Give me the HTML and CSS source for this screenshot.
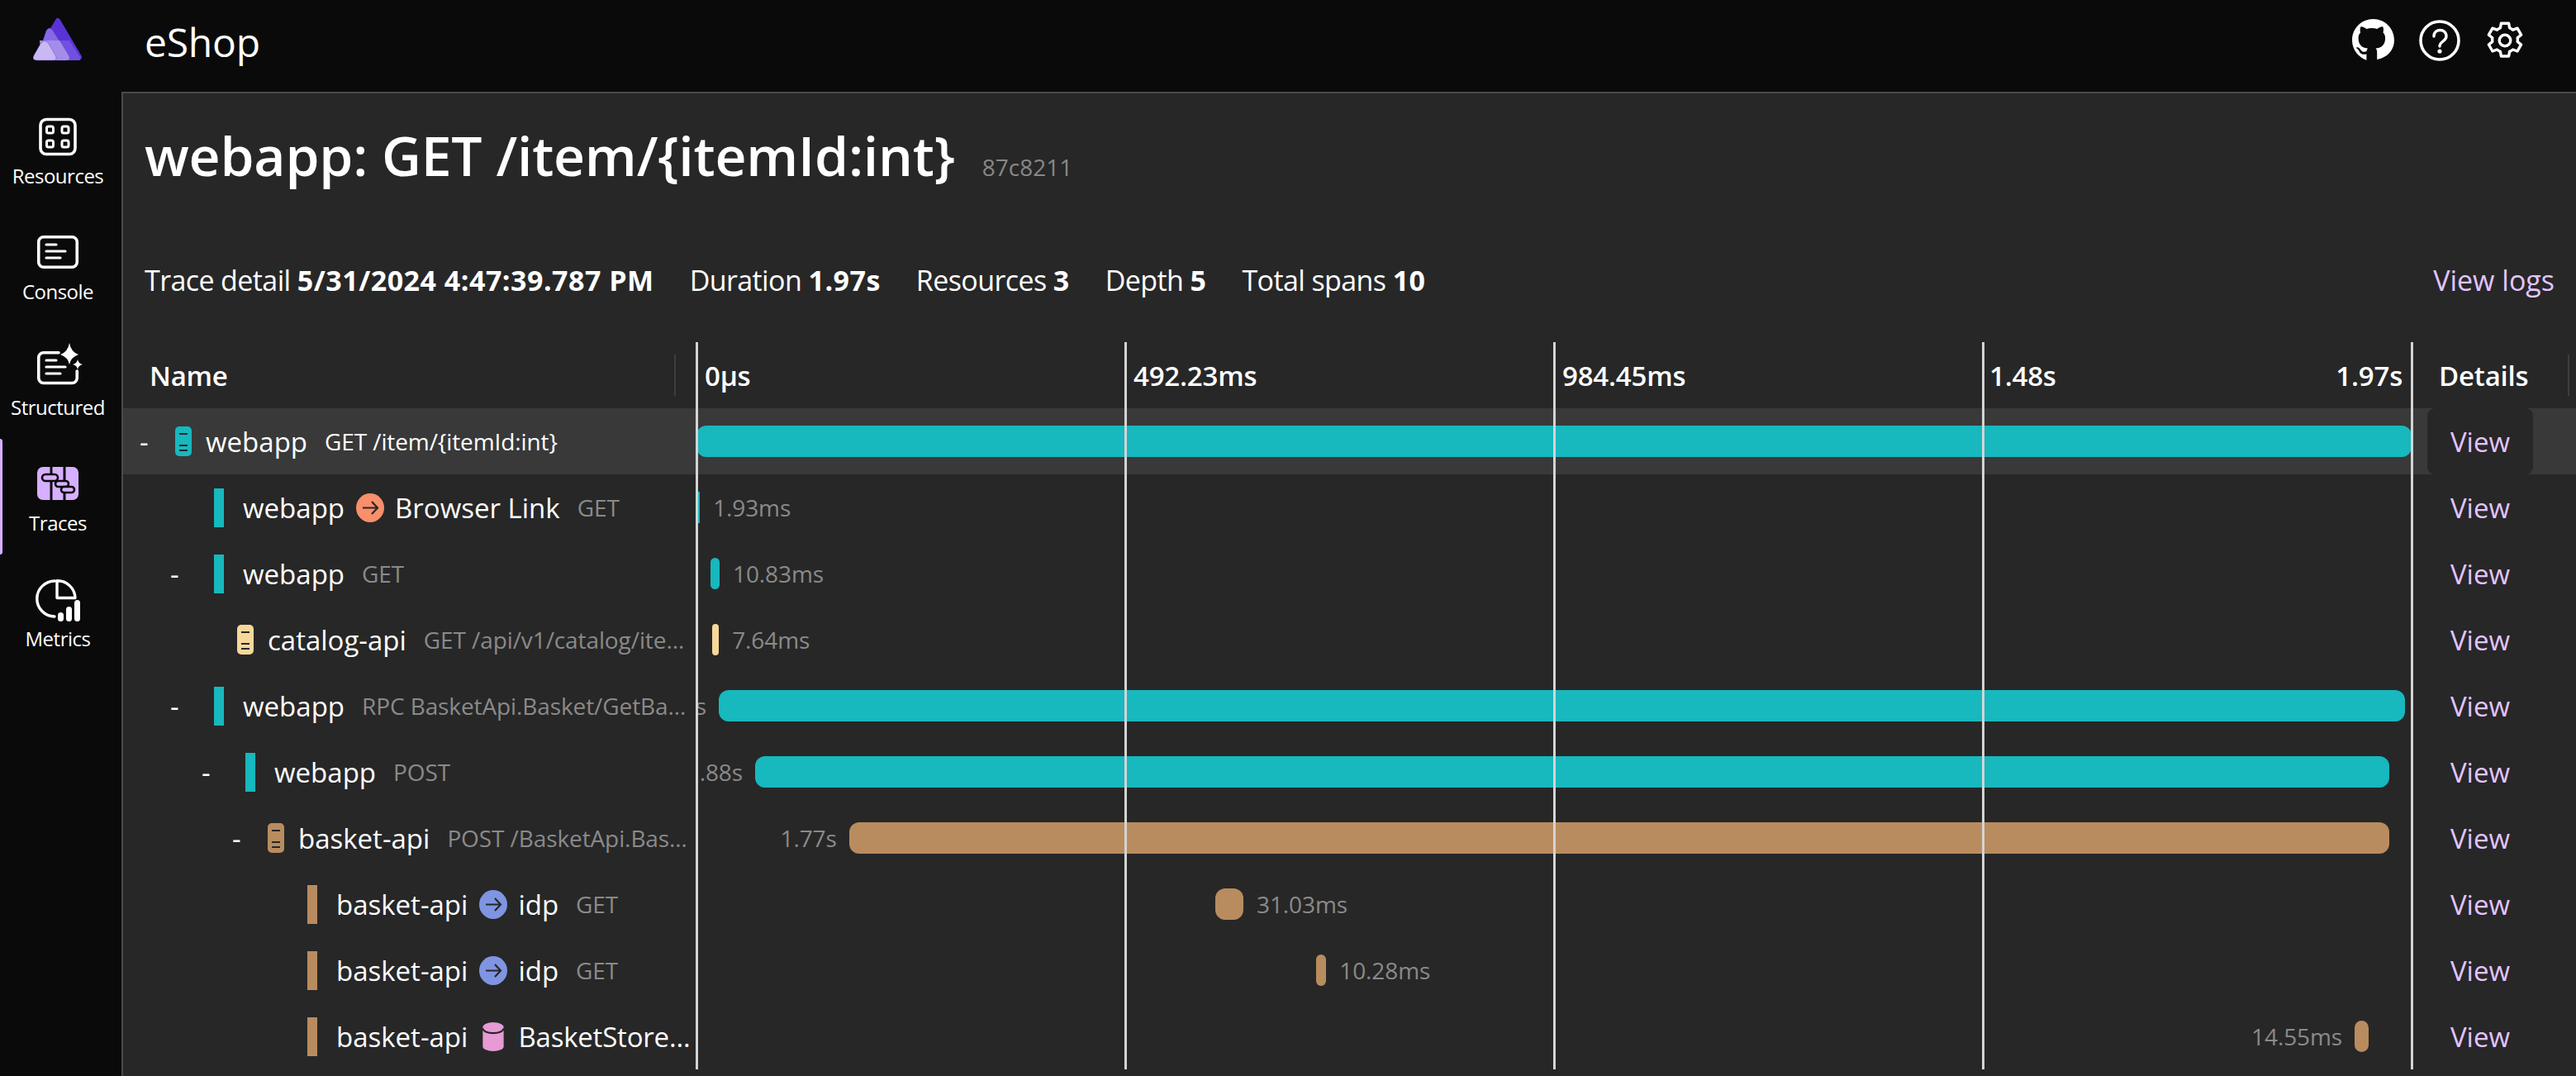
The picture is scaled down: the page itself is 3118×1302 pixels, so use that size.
FILE: index.html
```html
<!DOCTYPE html>
<html lang="en">
<head>
    <meta charset="UTF-8">
    <title>eShop - Trace detail</title>
    <link rel="stylesheet" href="styles.css">
</head>
<body>
    <header class="topbar">
        <div class="logo">
            <svg width="60" height="54" viewBox="0 0 60 54">
                <path d="M30 5 L56 49 H4 Z" fill="#5a33d6" stroke="#5a33d6" stroke-width="6" stroke-linejoin="round"/>
                <path d="M16 29 H44 L57 49 Q59 53 55 53 H10 Z" fill="#7050e0"/>
                <path d="M16 17 Q20 11 24 17 L43 47 Q46 53 40 53 H4 Z" fill="#8669ea" stroke="#4a2bb0" stroke-opacity=".35"/>
                <path d="M8 29 H32 L43 47 Q46 53 40 53 H10 Z" fill="#a28de9"/>
                <path d="M9 33 Q14 26 19 33 L27 47 Q30 53 24 53 H5 Q-2 53 1 47 Z" fill="#c9b8f4" stroke="#4a2bb0" stroke-opacity=".35"/>
            </svg>
        </div>
        <div class="app-name">eShop</div>
        <div class="top-icons">
            <svg width="51" height="51" viewBox="0 0 16 16"><path fill="#fff" d="M8 0C3.58 0 0 3.58 0 8c0 3.54 2.29 6.53 5.47 7.59v-2.24c-2.01.37-2.53-.49-2.69-.94-.09-.23-.48-.94-.82-1.13-.28-.15-.68-.52-.01-.53.63-.01 1.08.58 1.23.82.72 1.21 1.87.87 2.33.66.07-.52.28-.87.51-1.07-1.78-.2-3.64-.89-3.64-3.95 0-.87.31-1.59.82-2.15-.08-.2-.36-1.02.08-2.12 0 0 .67-.21 2.2.82.64-.18 1.32-.27 2-.27s1.36.09 2 .27c1.53-1.04 2.2-.82 2.2-.82.44 1.1.16 1.92.08 2.12.51.56.82 1.27.82 2.15 0 3.07-1.87 3.75-3.65 3.95.29.25.54.73.54 1.48v2.77C13.71 14.53 16 11.53 16 8c0-4.42-3.58-8-8-8z"/></svg>
            <svg width="50" height="50" viewBox="0 0 50 50">
                <circle cx="25" cy="25" r="23" fill="none" stroke="#fff" stroke-width="3.6"/>
                <path d="M18 20 C18 10 33 10 33 20 C33 26 25 26 25 32" fill="none" stroke="#fff" stroke-width="3.4" stroke-linecap="round"/>
                <circle cx="25" cy="38" r="2.6" fill="#fff"/>
            </svg>
            <svg width="48" height="50" viewBox="0 0 24 24" fill="none" stroke="#fff" stroke-width="1.7" stroke-linejoin="round">
                <circle cx="12" cy="12" r="3.4"/>
                <path d="M9.7 1.6 h4.6 l.5 2.8 a8 8 0 0 1 2 1.2 l2.7-1 2.3 4-2.2 1.8 a8 8 0 0 1 0 2.3 l2.2 1.8-2.3 4-2.7-1 a8 8 0 0 1-2 1.2 l-.5 2.8 h-4.6 l-.5-2.8 a8 8 0 0 1-2-1.2 l-2.7 1-2.3-4 2.2-1.8 a8 8 0 0 1 0-2.3 l-2.2-1.8 2.3-4 2.7 1 a8 8 0 0 1 2-1.2 z"/>
            </svg>
        </div>
    </header>

    <div class="shell">
        <nav class="sidenav">
            <a class="nav-item">
                <svg class="nav-icon" viewBox="0 0 60 48" fill="none" stroke="#fff">
                    <rect x="9" y="3.5" width="42" height="42" rx="7" stroke-width="3.6"/>
                    <rect x="16.5" y="12" width="8" height="8" rx="2" stroke-width="3"/>
                    <rect x="35" y="12" width="8" height="8" rx="2" stroke-width="3"/>
                    <rect x="16.5" y="29" width="8" height="8" rx="2" stroke-width="3"/>
                    <rect x="35" y="29" width="8" height="8" rx="2" stroke-width="3"/>
                </svg>
                <span>Resources</span>
            </a>
            <a class="nav-item">
                <svg class="nav-icon" viewBox="0 0 60 48" fill="none" stroke="#fff" stroke-linecap="round">
                    <rect x="6.75" y="5.75" width="46.5" height="36.5" rx="6" stroke-width="3.6"/>
                    <path d="M16 15 H28 M16 23 H39 M16 31 H33" stroke-width="3.2"/>
                </svg>
                <span>Console</span>
            </a>
            <a class="nav-item">
                <svg class="nav-icon" viewBox="0 0 60 48" fill="none" stroke="#fff" stroke-linecap="round">
                    <path d="M31 5.75 H12.75 a6 6 0 0 0-6 6 V36.5 a6 6 0 0 0 6 6 H47.25 a6 6 0 0 0 6-6 V28" stroke-width="3.6"/>
                    <path d="M16 15 H28 M16 23 H39 M16 31 H33" stroke-width="3.2"/>
                    <path fill="#fff" stroke="none" d="M44-6 Q46 5 55 8 Q46 11 44 20 Q42 11 33 8 Q42 5 44-6Z M54 14 Q55 19 60 20 Q55 21 54 26 Q53 21 48 20 Q53 19 54 14Z"/>
                </svg>
                <span>Structured</span>
            </a>
            <a class="nav-item active">
                <svg class="nav-icon" viewBox="0 0 60 48">
                    <rect x="5" y="4" width="50" height="40" rx="7" fill="#d6b0ff"/>
                    <path d="M22 4 V44 M38 4 V44" stroke="#0a0a0a" stroke-width="3"/>
                    <rect x="11" y="13" width="19" height="8" rx="4" fill="#d6b0ff" stroke="#0a0a0a" stroke-width="2.6"/>
                    <rect x="27" y="21" width="16" height="7" rx="3.5" fill="#d6b0ff" stroke="#0a0a0a" stroke-width="2.6"/>
                    <rect x="34" y="28" width="16" height="7" rx="3.5" fill="#d6b0ff" stroke="#0a0a0a" stroke-width="2.6"/>
                </svg>
                <span>Traces</span>
            </a>
            <a class="nav-item">
                <svg class="nav-icon" viewBox="0 0 60 48" fill="none" stroke="#fff" stroke-width="3.4">
                    <path d="M29 1.8 A21.5 21.5 0 0 1 51 22.5 H29 Z" stroke-linejoin="round"/>
                    <path d="M26.5 2 A21.5 21.5 0 0 0 26 45" stroke-linecap="round"/>
                    <rect x="30" y="40" width="7" height="11" rx="3.5" fill="#fff" stroke="none"/>
                    <rect x="40" y="33" width="7" height="18" rx="3.5" fill="#fff" stroke="none"/>
                    <rect x="50" y="25" width="7" height="26" rx="3.5" fill="#fff" stroke="none"/>
                </svg>
                <span>Metrics</span>
            </a>
        </nav>

        <main class="content">
            <div class="page-head">
                <h1>webapp: GET /item/{itemId:int}</h1>
                <span class="trace-id">87c8211</span>
            </div>

            <div class="summary">
                <span>Trace detail <strong>5/31/2024 4:47:39.787 PM</strong></span>
                <span>Duration <strong>1.97s</strong></span>
                <span>Resources <strong>3</strong></span>
                <span>Depth <strong>5</strong></span>
                <span>Total spans <strong>10</strong></span>
                <a class="view-logs">View logs</a>
            </div>

            <div class="grid">
                <!-- ticks sit over every row -->
                <div class="gridlines">
                    <i></i><i></i><i></i><i></i><i></i>
                </div>

                <div class="row head">
                    <div class="name-cell"><span class="col-title">Name</span></div>
                    <div class="ticks">
                        <span>0µs</span>
                        <span>492.23ms</span>
                        <span>984.45ms</span>
                        <div class="last-tick"><span>1.48s</span><span>1.97s</span></div>
                    </div>
                    <div class="details-cell"><span class="col-title">Details</span></div>
                </div>

                <div class="row hover">
                    <div class="name-cell d1">
                        <span class="toggle">-</span>
                        <svg class="srv" viewBox="0 0 20 36"><rect width="20" height="36" rx="5" fill="#17b8be"/><path d="M5 9 H15 M5 23 H15 M5 29 H15" stroke="#272727" stroke-width="2.2"/></svg>
                        <span class="res">webapp</span>
                        <span class="op bright">GET /item/{itemId:int}</span>
                    </div>
                    <div class="track"><div class="bar teal" style="left:0%;width:100%"></div></div>
                    <div class="details-cell"><a class="view on">View</a></div>
                </div>

                <div class="row">
                    <div class="name-cell d2">
                        <span class="tick-bar teal"></span>
                        <span class="res">webapp</span>
                        <svg class="peer" viewBox="0 0 34 35"><ellipse cx="17" cy="17.5" rx="17" ry="17.5" fill="#f98f6b"/><path d="M8 17.5 H26 M19 10 L26 17.5 L19 25" fill="none" stroke="#272727" stroke-width="2.2"/></svg>
                        <span class="res">Browser Link</span>
                        <span class="op">GET</span>
                    </div>
                    <div class="track"><div class="bar teal sliver" style="left:.1%;width:.1%"><span class="dur after">1.93ms</span></div></div>
                    <div class="details-cell"><a class="view">View</a></div>
                </div>

                <div class="row">
                    <div class="name-cell d2">
                        <span class="toggle">-</span>
                        <span class="tick-bar teal"></span>
                        <span class="res">webapp</span>
                        <span class="op">GET</span>
                    </div>
                    <div class="track"><div class="bar teal" style="left:.82%;width:.53%"><span class="dur after">10.83ms</span></div></div>
                    <div class="details-cell"><a class="view">View</a></div>
                </div>

                <div class="row">
                    <div class="name-cell d3">
                        <svg class="srv" viewBox="0 0 20 36"><rect width="20" height="36" rx="5" fill="#f7d89a"/><path d="M5 9 H15 M5 23 H15 M5 29 H15" stroke="#272727" stroke-width="2.2"/></svg>
                        <span class="res">catalog-api</span>
                        <span class="op">GET /api/v1/catalog/items/{id:int}</span>
                    </div>
                    <div class="track"><div class="bar sand" style="left:.92%;width:.39%"><span class="dur after">7.64ms</span></div></div>
                    <div class="details-cell"><a class="view">View</a></div>
                </div>

                <div class="row">
                    <div class="name-cell d2">
                        <span class="toggle">-</span>
                        <span class="tick-bar teal"></span>
                        <span class="res">webapp</span>
                        <span class="op">RPC BasketApi.Basket/GetBasketById</span>
                    </div>
                    <div class="track"><div class="bar teal" style="left:1.3%;width:98.33%"><span class="dur before">1.95s</span></div></div>
                    <div class="details-cell"><a class="view">View</a></div>
                </div>

                <div class="row">
                    <div class="name-cell d3">
                        <span class="toggle">-</span>
                        <span class="tick-bar teal"></span>
                        <span class="res">webapp</span>
                        <span class="op">POST</span>
                    </div>
                    <div class="track"><div class="bar teal" style="left:3.42%;width:95.28%"><span class="dur before">1.88s</span></div></div>
                    <div class="details-cell"><a class="view">View</a></div>
                </div>

                <div class="row">
                    <div class="name-cell d4">
                        <span class="toggle">-</span>
                        <svg class="srv" viewBox="0 0 20 36"><rect width="20" height="36" rx="5" fill="#b88c5f"/><path d="M5 9 H15 M5 23 H15 M5 29 H15" stroke="#272727" stroke-width="2.2"/></svg>
                        <span class="res">basket-api</span>
                        <span class="op">POST /BasketApi.Basket/GetBasketById</span>
                    </div>
                    <div class="track"><div class="bar brown" style="left:8.9%;width:89.8%"><span class="dur before">1.77s</span></div></div>
                    <div class="details-cell"><a class="view">View</a></div>
                </div>

                <div class="row">
                    <div class="name-cell d5">
                        <span class="tick-bar brown"></span>
                        <span class="res">basket-api</span>
                        <svg class="peer" viewBox="0 0 34 35"><ellipse cx="17" cy="17.5" rx="17" ry="17.5" fill="#7f95e2"/><path d="M8 17.5 H26 M19 10 L26 17.5 L19 25" fill="none" stroke="#272727" stroke-width="2.2"/></svg>
                        <span class="res">idp</span>
                        <span class="op">GET</span>
                    </div>
                    <div class="track"><div class="bar brown" style="left:30.25%;width:1.64%"><span class="dur after">31.03ms</span></div></div>
                    <div class="details-cell"><a class="view">View</a></div>
                </div>

                <div class="row">
                    <div class="name-cell d5">
                        <span class="tick-bar brown"></span>
                        <span class="res">basket-api</span>
                        <svg class="peer" viewBox="0 0 34 35"><ellipse cx="17" cy="17.5" rx="17" ry="17.5" fill="#7f95e2"/><path d="M8 17.5 H26 M19 10 L26 17.5 L19 25" fill="none" stroke="#272727" stroke-width="2.2"/></svg>
                        <span class="res">idp</span>
                        <span class="op">GET</span>
                    </div>
                    <div class="track"><div class="bar brown" style="left:36.14%;width:.58%"><span class="dur after">10.28ms</span></div></div>
                    <div class="details-cell"><a class="view">View</a></div>
                </div>

                <div class="row">
                    <div class="name-cell d5">
                        <span class="tick-bar brown"></span>
                        <span class="res">basket-api</span>
                        <svg class="peer" viewBox="0 0 34 36"><path d="M4 6 A13 6 0 0 1 30 6 V30 A13 6 0 0 1 4 30 Z" fill="#e69bd4"/><path d="M4 7.5 A13 6 0 0 0 30 7.5" fill="none" stroke="#272727" stroke-width="2.2"/></svg>
                        <span class="res ell">BasketStore.GetBasket</span>
                    </div>
                    <div class="track"><div class="bar brown" style="left:96.68%;width:.82%"><span class="dur before">14.55ms</span></div></div>
                    <div class="details-cell"><a class="view">View</a></div>
                </div>
            </div>
        </main>
    </div>
</body>
</html>
```

FILE: styles.css
```css
html, body {
    margin: 0;
    height: 100%;
    overflow: hidden;
}
body {
    background: #0a0a0a;
    color: #fff;
    font-family: "Open Sans", "Noto Sans", sans-serif;
}
.topbar {
    height: 111px;
    display: flex;
    align-items: center;
    background: #0a0a0a;
}
.logo {
    width: 140px;
    margin-right: 7px;
    align-self: flex-start;
    padding-top: 20px;
    display: flex;
    justify-content: center;
}
.app-name {
    margin-left: 28px;
    font-size: 48px;
    letter-spacing: -0.2px;
    margin-bottom: 10px;
}
.top-icons {
    margin-left: auto;
    display: flex;
    align-items: center;
    gap: 30px;
    padding-right: 62px;
    margin-bottom: 14px;
}
.shell {
    display: flex;
    height: 1191px;
}
.sidenav {
    width: 147px;
    flex: none;
}
.nav-item {
    position: relative;
    display: flex;
    flex-direction: column;
    align-items: center;
    width: 140px;
    height: 140px;
    padding-top: 30px;
    box-sizing: border-box;
    font-size: 24px;
    line-height: 30px;
    letter-spacing: -0.5px;
}
.nav-item.active::before {
    content: "";
    position: absolute;
    left: 0;
    top: 0;
    width: 3px;
    height: 140px;
    border-radius: 0 3px 3px 0;
    background: #d6b0ff;
}
.nav-icon {
    width: 60px;
    height: 48px;
    margin-bottom: 9px;
    overflow: visible;
}
.content {
    flex: 1;
    min-width: 0;
    background: #272727;
    border-left: 2px solid #4a4a4a;
    border-top: 2px solid #4a4a4a;
}
.page-head {
    display: flex;
    align-items: baseline;
    gap: 33px;
    padding: 26px 0 0 26px;
    height: 100px;
}
h1 {
    margin: 0;
    font-size: 66px;
    font-weight: 600;
    letter-spacing: -0.2px;
    line-height: 96px;
}
.trace-id {
    font-size: 28px;
    color: #888;
}
.summary {
    display: flex;
    align-items: center;
    gap: 43px;
    height: 60px;
    margin-top: 70px;
    padding: 0 26px;
    font-size: 34px;
    letter-spacing: -0.6px;
}
.summary strong {
    font-weight: 700;
    letter-spacing: 0.5px;
}
.view-logs {
    margin-left: auto;
    letter-spacing: 0;
    color: #e3c4ff;
}
.grid {
    position: relative;
    margin-top: 45px;
}
.gridlines {
    position: absolute;
    left: 693px;
    width: 2079px;
    top: 0;
    bottom: 0;
    display: flex;
    justify-content: space-between;
    z-index: 3;
    pointer-events: none;
}
.gridlines i {
    width: 3px;
    background: #d4d4d4;
}
.row {
    display: grid;
    grid-template-columns: 694px 2076px 1fr;
    height: 80px;
    align-items: center;
}
.row.hover {
    background: #393939;
}
.name-cell {
    position: relative;
    display: flex;
    align-items: center;
    height: 100%;
    min-width: 0;
    box-sizing: border-box;
    padding-right: 3px;
    font-size: 33px;
    white-space: nowrap;
}
.head .name-cell {
    padding-left: 32px;
}
.col-title {
    font-size: 33px;
    font-weight: 600;
    letter-spacing: -0.2px;
}
.head .name-cell::after,
.head .details-cell::after {
    content: "";
    position: absolute;
    top: 15px;
    bottom: 15px;
    right: 25px;
    width: 2px;
    background: #3d3d3d;
}
.head .details-cell::after {
    right: 8px;
}
.d1 { padding-left: 73px; }
.d2 { padding-left: 110px; }
.d3 { padding-left: 148px; }
.d4 { padding-left: 185px; }
.d5 { padding-left: 223px; }
.toggle {
    position: absolute;
    margin-left: -53px;
    font-size: 33px;
}
.srv {
    flex: none;
    width: 20px;
    height: 36px;
    margin: 0 17px 0 -10px;
}
.tick-bar {
    flex: none;
    width: 12px;
    height: 47px;
    margin-right: 23px;
}
.teal { background: #17b8be; }
.sand { background: #f7d89a; }
.brown { background: #b88c5f; }
.res {
    flex: none;
}
.res.ell {
    flex: 0 1 auto;
    min-width: 0;
    overflow: hidden;
    text-overflow: ellipsis;
    letter-spacing: -0.2px;
}
.op {
    flex: 0 1 auto;
    min-width: 0;
    overflow: hidden;
    text-overflow: ellipsis;
    margin-left: 21px;
    font-size: 28px;
    letter-spacing: -0.1px;
    color: #8a8a8a;
}
.op.bright {
    color: #fff;
}
.peer {
    flex: none;
    width: 34px;
    height: 35px;
    margin: 0 13px 0 14px;
}
.ticks {
    display: flex;
    font-size: 33px;
    font-weight: 600;
    letter-spacing: -0.2px;
}
.ticks > span,
.last-tick {
    flex: 0 0 519px;
    box-sizing: border-box;
    padding-left: 10px;
}
.last-tick {
    display: flex;
    justify-content: space-between;
    padding-left: 8px;
    padding-right: 11px;
}
.track {
    position: relative;
    height: 100%;
    overflow: hidden;
}
.bar {
    position: absolute;
    top: 21px;
    height: 38px;
    border-radius: 12px;
}
.bar.sliver {
    border-radius: 0;
    min-width: 2px;
}
.dur {
    position: absolute;
    top: 0;
    line-height: 38px;
    font-size: 28px;
    letter-spacing: -0.1px;
    color: #8a8a8a;
    white-space: nowrap;
}
.dur.after {
    left: calc(100% + 16px);
}
.dur.before {
    right: calc(100% + 15px);
}
.details-cell {
    position: relative;
    height: 100%;
    display: flex;
    align-items: center;
    box-sizing: border-box;
    padding-left: 33px;
}
.view {
    display: flex;
    align-items: center;
    justify-content: center;
    width: 128px;
    margin-left: -14px;
    height: 80px;
    border-radius: 9px;
    font-size: 33px;
    color: #e3c4ff;
}
.view.on {
    background: #272727;
}
```
